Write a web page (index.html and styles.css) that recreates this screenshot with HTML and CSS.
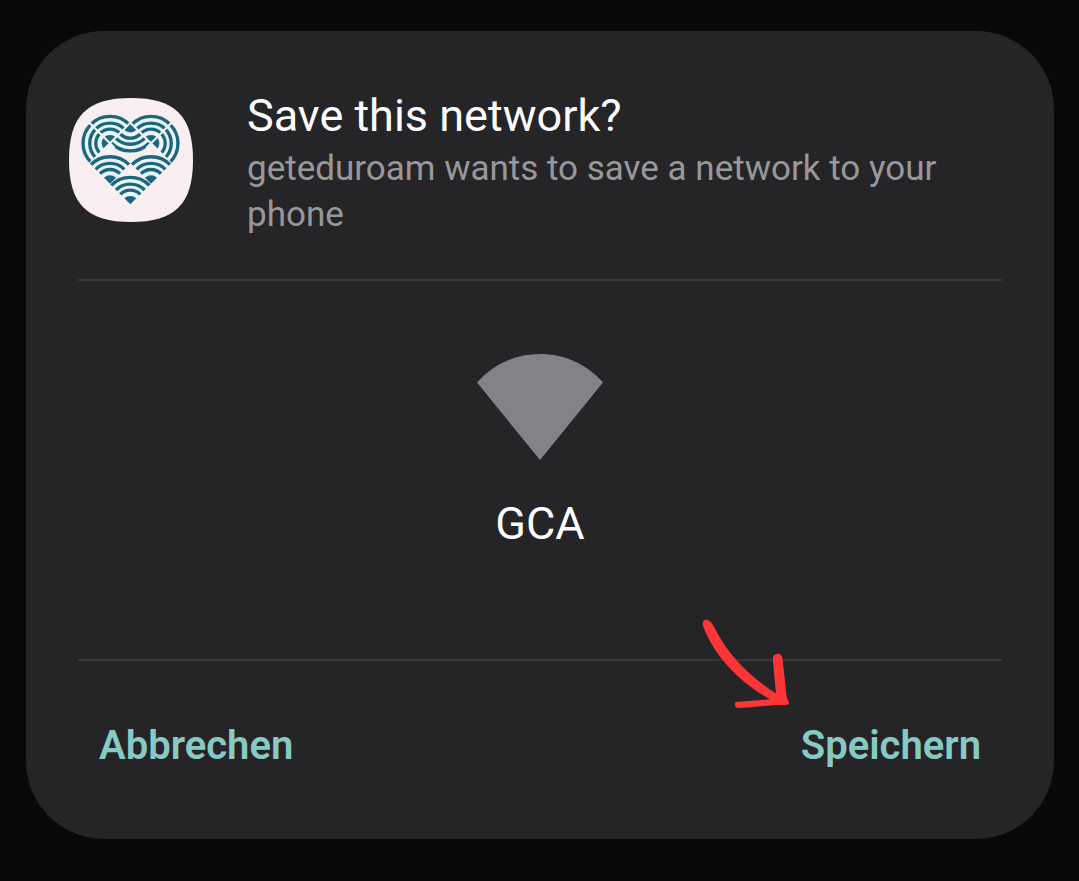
FILE: index.html
```html
<!DOCTYPE html>
<html lang="en">
<head>
<meta charset="utf-8">
<meta name="viewport" content="width=device-width, initial-scale=1">
<title>Save this network?</title>
<link rel="stylesheet" href="styles.css">
</head>
<body>
<main class="dialog" role="dialog" aria-labelledby="title">
  <header class="dialog-header">
    <svg class="app-icon" viewBox="27 24 372 372" aria-hidden="true">
      <defs>
        <g id="fan">
          <path class="fan-back" d="M0 0L-60 -60A85 85 0 0 1 60 -60Z"/>
          <path class="fan-core" d="M0 0L-18 -18A26 26 0 0 1 18 -18Z"/>
          <path class="fan-arc" d="M-30 -30A42 42 0 0 1 30 -30M-43 -43A61 61 0 0 1 43 -43M-57 -57A80 80 0 0 1 57 -57"/>
        </g>
      </defs>
      <path class="icon-tile" d="M213 24C345 24 399 78 399 210S345 396 213 396 27 342 27 210 81 24 213 24Z"/>
      <use href="#fan" transform="translate(150 160)"/>
      <use href="#fan" transform="translate(150 160) rotate(-90)"/>
      <use href="#fan" transform="translate(273 160)"/>
      <use href="#fan" transform="translate(273 160) rotate(90)"/>
      <use href="#fan" transform="translate(211 102) rotate(180)"/>
      <path class="icon-gap" d="M86 96L164 174M86 224L211 98M337 96L259 174M337 224L211 98"/>
      <use href="#fan" transform="translate(150 281)"/>
      <use href="#fan" transform="translate(273 281)"/>
      <use href="#fan" transform="translate(211 343)"/>
    </svg>
    <div class="heading">
      <h1 class="title" id="title">Save this network?</h1>
      <p class="subtitle">geteduroam wants to save a network to your phone</p>
    </div>
  </header>
  <section class="network">
    <svg class="wifi" viewBox="0 0 126 106" aria-hidden="true"><path d="M63 106L0 28.500C17 9.500 39 0 63 0S109 9.500 126 28.500Z"/></svg>
    <p class="ssid">GCA</p>
  </section>
  <footer class="actions">
    <button class="action" type="button">Abbrechen</button>
    <button class="action" type="button">Speichern</button>
  </footer>
  <svg class="arrow" viewBox="36 27 264 270" aria-hidden="true">
    <path d="M39 47C36 33 42 28 50 29C60 31 67 40 73 52C112 133 172 190 236 236L258 250C254 205 251 175 249 151C247 137 253 132 265 131C274 132 277 139 278 150L290 260C291 267 298 274 297 280C293 286 286 286 278 285C232 285 190 292 142 294C137 291 134 287 135 280C136 276 141 275 147 275L241 268C151 218 74 142 39 47Z"/>
  </svg>
</main>
</body>
</html>
```
FILE: styles.css
```css
* { box-sizing: border-box; }

body {
  margin: 0;
  padding: 31px 25px 42px 26px;
  min-height: 100vh;
  background: #09090b;
  font-family: Roboto, "Liberation Sans", sans-serif;
}

.dialog {
  position: relative;
  border-radius: 78px;
  background: #252527;
  color: #fcfcff;
}

.dialog-header {
  display: flex;
  align-items: flex-start;
  gap: 54px;
  margin: 0 52px;
  padding: 59px 0 41px;
  border-bottom: 2px solid #38383a;
}

.app-icon {
  flex: none;
  width: 124px;
  height: 124px;
  margin: 8px 0 0 -9px;
}

.icon-tile { fill: #f9eef0; }
.fan-back { fill: #eaf4f9; }
.fan-core { fill: #1b6780; }
.fan-arc { fill: none; stroke: #1b6780; stroke-width: 10px; }
.icon-gap { fill: none; stroke: #eef4f8; stroke-width: 6px; }

.title,
.ssid {
  margin: 0;
  font-size: 45px;
  font-weight: 400;
  line-height: 52px;
}

.subtitle {
  margin: 4px 0 0;
  color: #98989b;
  font-size: 35px;
  line-height: 46px;
}

.network {
  display: flex;
  flex-direction: column;
  align-items: center;
  gap: 38px;
  margin: 0 52px;
  padding: 73px 0 109px;
  border-bottom: 2px solid #38383a;
}

.wifi {
  width: 126px;
  height: 106px;
  fill: #838286;
}

.actions {
  display: flex;
  justify-content: space-between;
  padding: 59px 73px 67px;
}

.action {
  padding: 0;
  border: 0;
  background: none;
  color: #87cac3;
  font-family: inherit;
  font-size: 40px;
  font-weight: 600;
  line-height: 52px;
  cursor: pointer;
}

.arrow {
  position: absolute;
  right: 264px;
  bottom: 130px;
  width: 88px;
  height: 90px;
  fill: #fc3637;
  pointer-events: none;
}
```
